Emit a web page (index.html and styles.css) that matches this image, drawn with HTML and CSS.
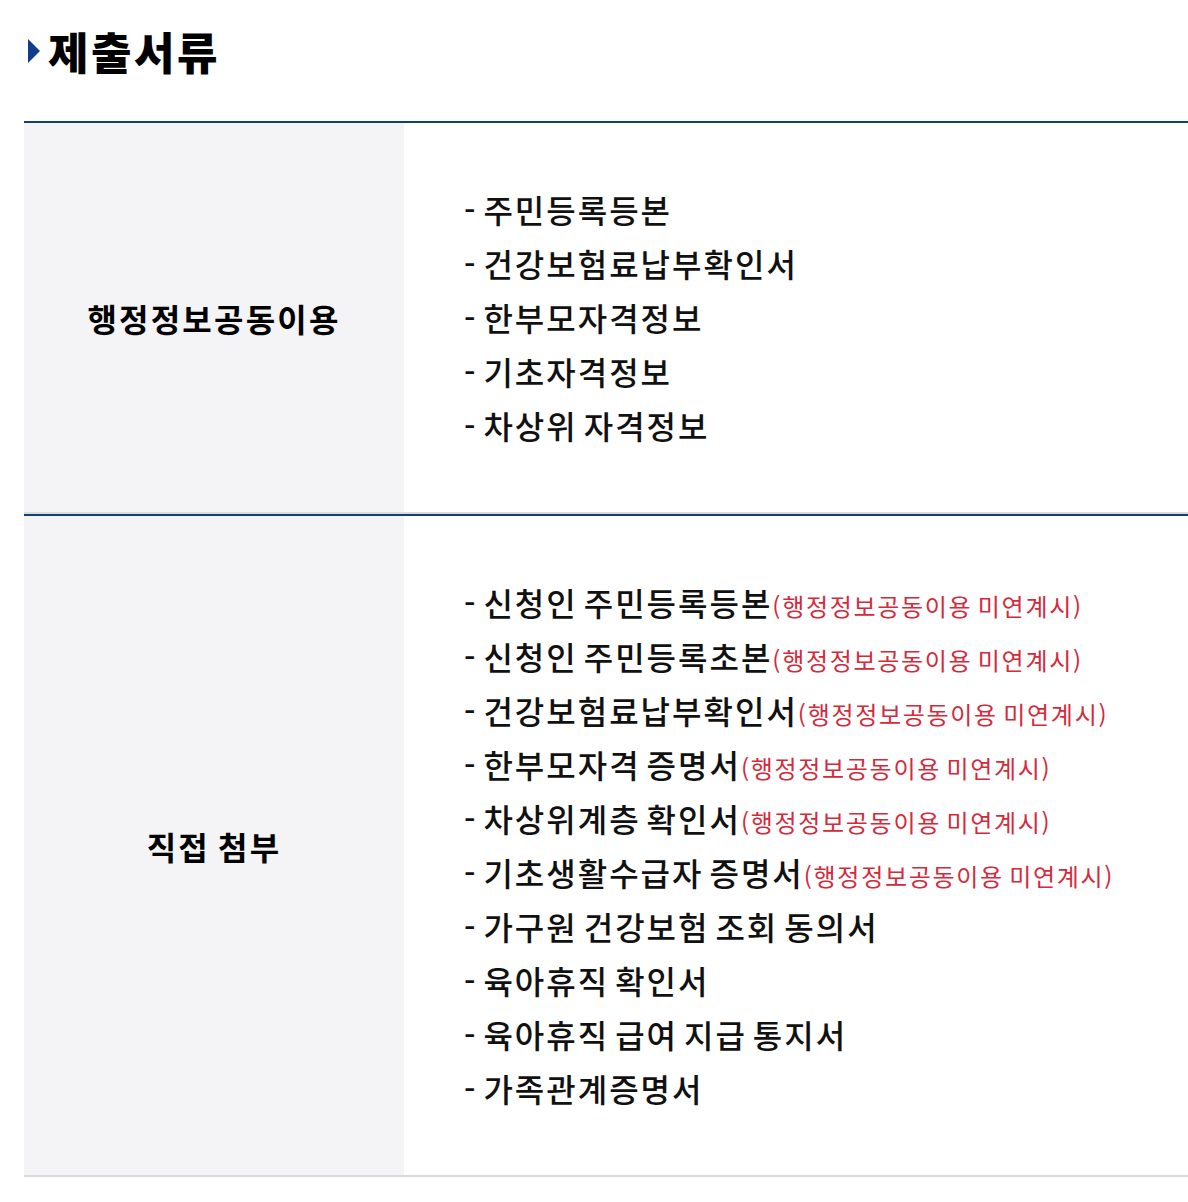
FILE: index.html
```html
<!DOCTYPE html>
<html lang="ko">
<head>
<meta charset="utf-8">
<link rel="stylesheet" href="styles.css">
</head>
<body>
<div class="page">
  <h2 class="title"><span class="arrow"></span>제출서류</h2>
  <div class="table">
    <div class="row">
      <div class="head">행정정보공동이용</div>
      <div class="body">
        <ul class="list">
          <li>- 주민등록등본</li>
          <li>- 건강보험료납부확인서</li>
          <li>- 한부모자격정보</li>
          <li>- 기초자격정보</li>
          <li>- 차상위 자격정보</li>
        </ul>
      </div>
    </div>
    <div class="row">
      <div class="head">직접 첨부</div>
      <div class="body">
        <ul class="list">
          <li>- 신청인 주민등록등본<span class="note">(행정정보공동이용 미연계시)</span></li>
          <li>- 신청인 주민등록초본<span class="note">(행정정보공동이용 미연계시)</span></li>
          <li>- 건강보험료납부확인서<span class="note">(행정정보공동이용 미연계시)</span></li>
          <li>- 한부모자격 증명서<span class="note">(행정정보공동이용 미연계시)</span></li>
          <li>- 차상위계층 확인서<span class="note">(행정정보공동이용 미연계시)</span></li>
          <li>- 기초생활수급자 증명서<span class="note">(행정정보공동이용 미연계시)</span></li>
          <li>- 가구원 건강보험 조회 동의서</li>
          <li>- 육아휴직 확인서</li>
          <li>- 육아휴직 급여 지급 통지서</li>
          <li>- 가족관계증명서</li>
        </ul>
      </div>
    </div>
  </div>
</div>
</body>
</html>
```
FILE: styles.css
```css
html, body {
  margin: 0;
  padding: 0;
  background: #ffffff;
}
body {
  font-family: "Noto Sans CJK KR", "Noto Sans", sans-serif;
  color: #111111;
}
.page {
  padding: 22px 0 0 24px;
}
.title {
  margin: 0;
  display: flex;
  align-items: center;
  gap: 8px;
  height: 58px;
  font-size: 44px;
  font-weight: 900;
  letter-spacing: 2.5px;
  color: #000;
}
.arrow {
  width: 0;
  height: 0;
  margin-left: 4px;
  border-top: 12px solid transparent;
  border-bottom: 12px solid transparent;
  border-left: 12px solid #0f3f8c;
}
.table {
  margin-top: 41px;
  border-bottom: 2px solid #d9d9d9;
}
.row {
  display: flex;
  border-top: 2px solid #113f7a;
}
.row:first-child {
  border-bottom: 2px solid #dcdcdc;
}
.head {
  width: 380px;
  flex: none;
  background: #f4f4f6;
  display: flex;
  align-items: center;
  justify-content: center;
  font-size: 32px;
  font-weight: 700;
  color: #000;
  letter-spacing: 2.2px;
  word-spacing: -3px;
}
.body {
  flex: 1;
  padding: 59px 0 60px 60px;
}
.list {
  list-style: none;
  margin: 0;
  padding: 0;
}
.list li {
  height: 54px;
  line-height: 54px;
  font-size: 32px;
  font-weight: 500;
  color: #111;
  letter-spacing: 2px;
  word-spacing: -5px;
  white-space: nowrap;
}
.note {
  font-size: 24px;
  font-weight: 400;
  color: #d42a3c;
  letter-spacing: 1.7px;
  word-spacing: -3px;
}
```
